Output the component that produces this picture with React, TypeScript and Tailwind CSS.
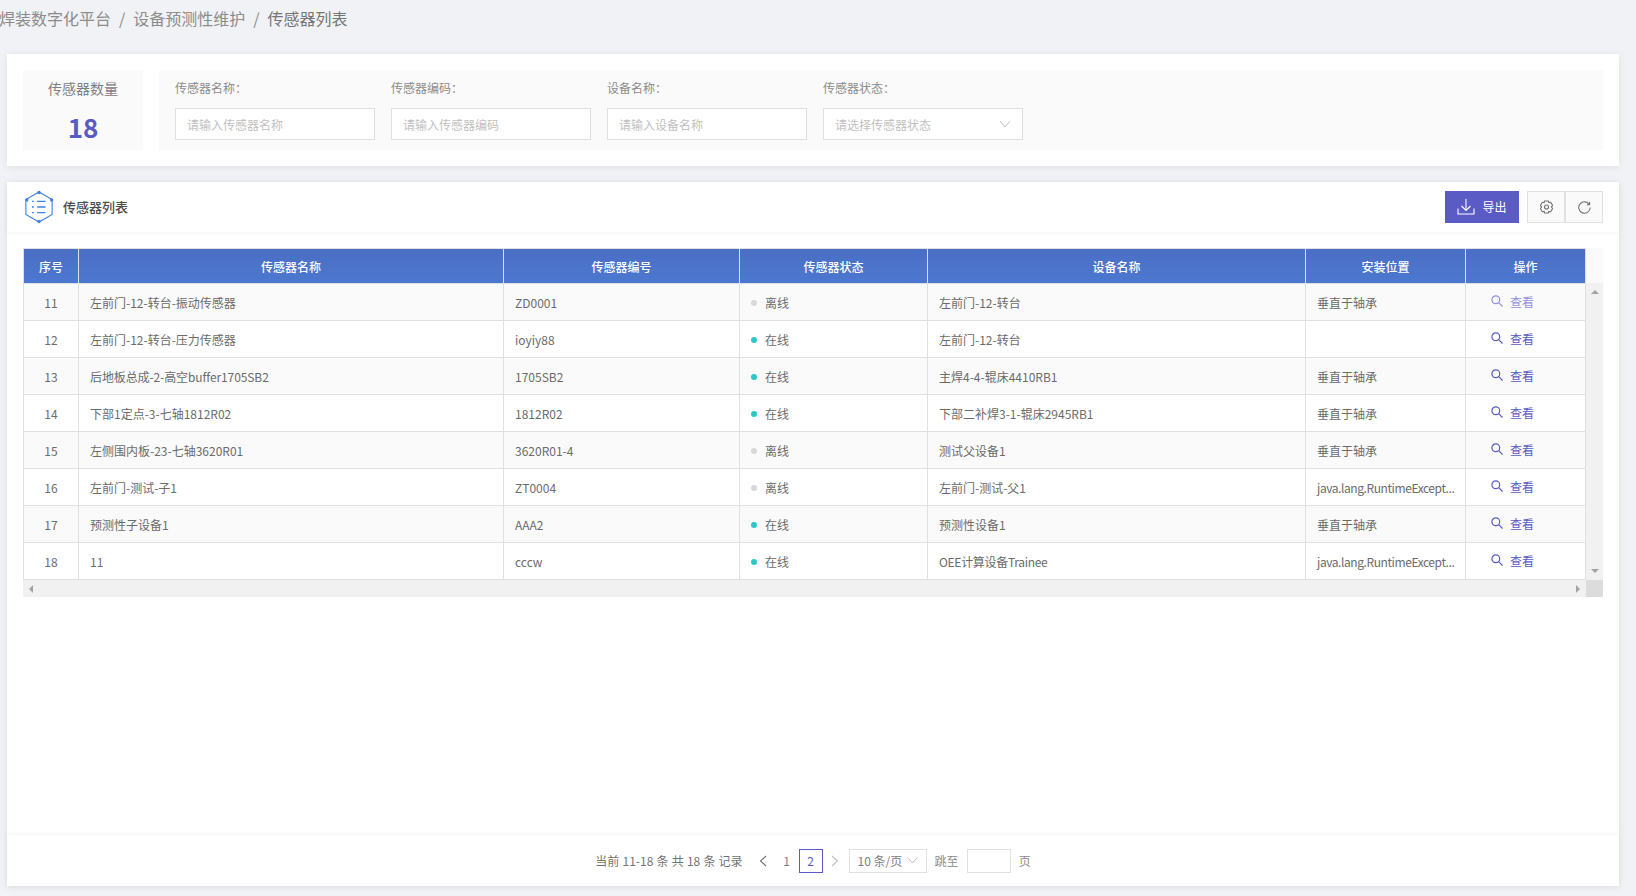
const rows = [
  ["11", "左前门-12-转台-振动传感器", "ZD0001", "离线", "左前门-12-转台", "垂直于轴承"],
  ["12", "左前门-12-转台-压力传感器", "ioyiy88", "在线", "左前门-12-转台", ""],
  ["13", "后地板总成-2-高空buffer1705SB2", "1705SB2", "在线", "主焊4-4-辊床4410RB1", "垂直于轴承"],
  ["14", "下部1定点-3-七轴1812R02", "1812R02", "在线", "下部二补焊3-1-辊床2945RB1", "垂直于轴承"],
  ["15", "左侧围内板-23-七轴3620R01", "3620R01-4", "离线", "测试父设备1", "垂直于轴承"],
  ["16", "左前门-测试-子1", "ZT0004", "离线", "左前门-测试-父1", "java.lang.RuntimeExcept..."],
  ["17", "预测性子设备1", "AAA2", "在线", "预测性设备1", "垂直于轴承"],
  ["18", "11", "cccw", "在线", "OEE计算设备Trainee", "java.lang.RuntimeExcept..."],
];

const font = "font-['Noto_Sans_CJK_SC','Noto_Sans',sans-serif]";

function track(text: string) {
  if (text.startsWith("java")) return "tracking-[-0.42px]";
  if (text.includes("Trainee")) return "tracking-[-0.3px]";
  if (text.includes("buffer")) return "tracking-[-0.1px]";
  return "";
}

function Filter({ label, placeholder, select }: { label: string; placeholder: string; select?: boolean }) {
  return (
    <div className="w-[200px] flex flex-col">
      <div className="h-[38px] text-[12px] leading-[36px] text-[#8c8c8c]">{label}</div>
      <div className="h-[32px] bg-white border border-[#e0e0e0] px-[11px] flex items-center justify-between">
        <span className="text-[12px] text-[#bfbfbf] mt-[2px]">{placeholder}</span>
        {select && (
          <svg width="12" height="8" viewBox="0 0 12 8" fill="none" stroke="#bfbfbf" strokeWidth="1">
            <path d="M1 1l5 6 5-6" />
          </svg>
        )}
      </div>
    </div>
  );
}

function Logo() {
  return (
    <svg width="30" height="34" viewBox="0 0 32 36" fill="none" stroke="#3f82e8" strokeWidth="1.2">
      <path d="M16 2 30 10v16L16 34 2 26V10Z" />
      <circle cx="16" cy="2.5" r="1.2" fill="#3f82e8" />
      <circle cx="3" cy="10.5" r="1.2" fill="#3f82e8" />
      <circle cx="29.5" cy="10.5" r="1.2" fill="#3f82e8" />
      <circle cx="16" cy="33.5" r="1.2" fill="#3f82e8" />
      <path d="M14 12h9M14 18h9M14 24h9" strokeWidth="1.4" />
      <path d="M8.5 12h2M8.5 18h2M8.5 24h2" strokeWidth="1.4" />
    </svg>
  );
}

export default function App() {
  return (
    <div className={`w-[1636px] h-[896px] overflow-hidden bg-[#f0f2f5] ${font} flex flex-col`}>
      <div className="h-[54px] shrink-0 ml-[-1px] pt-[4px] flex items-start text-[16px] leading-[28px] text-[#8c8c8c] whitespace-nowrap">
        <span>焊装数字化平台</span>
        <span className="mx-[8px]">/</span>
        <span>设备预测性维护</span>
        <span className="mx-[8px]">/</span>
        <span className="text-[#757575]">传感器列表</span>
      </div>

      <div className="ml-[7px] mr-[17px] flex flex-col gap-[16px] h-[832px]">
        <div className="h-[112px] shrink-0 bg-white shadow-[0_1px_8px_rgba(0,0,0,0.08)] px-[16px] py-[16px] flex gap-[16px]">
          <div className="w-[120px] bg-[#fafafa] flex flex-col items-center">
            <div className="text-[14px] leading-[20px] mt-[8px] text-[#808080]">传感器数量</div>
            <div className="text-[26px] leading-[34px] mt-[12px] font-bold text-[#5a5bc4]">18</div>
          </div>
          <div className="flex-1 bg-[#fafafa] px-[16px] flex gap-[16px] mt-0">
            <Filter label="传感器名称：" placeholder="请输入传感器名称" />
            <Filter label="传感器编码：" placeholder="请输入传感器编码" />
            <Filter label="设备名称：" placeholder="请输入设备名称" />
            <Filter label="传感器状态：" placeholder="请选择传感器状态" select />
          </div>
        </div>

        <div className="h-[704px] shrink-0 bg-white shadow-[0_1px_8px_rgba(0,0,0,0.08)] flex flex-col">
          <div className="h-[50px] shrink-0 shadow-[0_1px_4px_rgba(0,0,0,0.05)] pl-[17px] pr-[16px] flex items-center">
            <Logo />
            <span className="ml-[9px] text-[13px] font-medium text-[#4d4d4d]">传感器列表</span>
            <div className="ml-auto flex items-center">
              <button className="w-[74px] h-[32px] bg-[#5a5bc4] text-white text-[12px] flex items-center justify-center gap-[7px] mr-[8px]">
                <svg width="18" height="17" viewBox="0 0 18 17" fill="none" stroke="white" strokeWidth="1.1" className="mb-[2px]">
                  <path d="M9 1v11M4.5 8 9 12.5 13.5 8M1 10.5V16h16v-5.5" />
                </svg>
                导出
              </button>
              <button className="w-[38px] h-[32px] bg-[#fafafa] border border-[#e0e0e0] flex items-center justify-center">
                <svg width="13" height="14" viewBox="0 0 13 14" fill="none" stroke="#737373" strokeWidth="1.1">
                  <path d="M4.6 1h3.8l.5 1.6 1.8-.3 1.9 3.2-1.2 1.5 1.2 1.5-1.9 3.2-1.8-.3L8.4 13H4.6l-.5-1.6-1.8.3L.4 8.5 1.6 7 .4 5.5l1.9-3.2 1.8.3Z" />
                  <circle cx="6.5" cy="7" r="2" />
                </svg>
              </button>
              <button className="w-[38px] h-[32px] bg-[#fafafa] border border-[#e0e0e0] flex items-center justify-center">
                <svg width="13" height="13" viewBox="0 0 13 13" fill="none" stroke="#737373" strokeWidth="1.1">
                  <path d="M11.4 3.6A5.7 5.7 0 1 0 12.2 6.5M11.6 1v2.8H8.9" />
                </svg>
              </button>
            </div>
          </div>

          <div className="mt-[16px] mx-[16px] flex flex-col w-[1580px]">
            <div className="flex">
              <table className="w-[1563px] table-fixed border-collapse text-[12px] text-[#6b6b6b]">
                <colgroup>
                  <col className="w-[55px]" />
                  <col className="w-[425px]" />
                  <col className="w-[236px]" />
                  <col className="w-[188px]" />
                  <col className="w-[378px]" />
                  <col className="w-[160px]" />
                  <col className="w-[120px]" />
                </colgroup>
                <thead>
                  <tr className="h-[35px] bg-gradient-to-b from-[#4a6fc4] to-[#4c78d0] text-white">
                    {["序号", "传感器名称", "传感器编号", "传感器状态", "设备名称", "安装位置", "操作"].map((h) => (
                      <th key={h} className="border border-[#e0e0e0] font-medium text-center p-0 pt-[1px]">
                        {h}
                      </th>
                    ))}
                  </tr>
                </thead>
                <tbody>
                  {rows.map((r, i) => (
                    <tr key={r[0]} className={`h-[37px] ${i % 2 === 0 ? "bg-[#fafafa]" : "bg-white"}`}>
                      <td className="border border-[#e0e0e0] text-center p-0 pt-[2px]">{r[0]}</td>
                      <td className={`border border-[#e0e0e0] px-[11px] pt-[2px] ${track(r[1])}`}>{r[1]}</td>
                      <td className="border border-[#e0e0e0] px-[11px] pt-[2px]">{r[2]}</td>
                      <td className="border border-[#e0e0e0] px-[11px] pt-[2px]">
                        <span className="flex items-center gap-[8px]">
                          <i className={`block w-[6px] h-[6px] rounded-full ${r[3] === "在线" ? "bg-[#2cc7c9]" : "bg-[#d9d9d9]"}`} />
                          {r[3]}
                        </span>
                      </td>
                      <td className={`border border-[#e0e0e0] px-[11px] pt-[2px] ${track(r[4])}`}>{r[4]}</td>
                      <td className={`border border-[#e0e0e0] px-[11px] pt-[2px] whitespace-nowrap ${track(r[5])}`}>{r[5]}</td>
                      <td className="border border-[#e0e0e0] p-0 pl-[25px]">
                        <span className={`flex items-center gap-[7px] ${i === 0 ? "text-[#9292dc]" : "text-[#5a5bc4]"}`}>
                          <svg width="12" height="12" viewBox="0 0 12 12" fill="none" stroke="currentColor" strokeWidth="1.2" className="shrink-0 mb-[2px]">
                            <circle cx="4.8" cy="4.8" r="3.9" />
                            <path d="M7.7 7.7 11.5 11.5" />
                          </svg>
                          查看
                        </span>
                      </td>
                    </tr>
                  ))}
                </tbody>
              </table>
              <div className="w-[17px] flex flex-col">
                <div className="h-[35px] bg-[#fafafa]" />
                <div className="flex-1 bg-[#f1f1f1] flex flex-col items-center justify-between py-[7px]">
                  <i className="block w-0 h-0 border-x-[4px] border-x-transparent border-b-[4px] border-b-[#a3a3a3]" />
                  <i className="block w-0 h-0 border-x-[4px] border-x-transparent border-t-[4px] border-t-[#a3a3a3]" />
                </div>
              </div>
            </div>
            <div className="flex h-[17px]">
              <div className="w-[1563px] bg-[#f1f1f1] flex items-center justify-between px-[6px]">
                <i className="block w-0 h-0 border-y-[4px] border-y-transparent border-r-[4px] border-r-[#a3a3a3]" />
                <i className="block w-0 h-0 border-y-[4px] border-y-transparent border-l-[4px] border-l-[#a3a3a3]" />
              </div>
              <div className="w-[17px] bg-[#dcdcdc]" />
            </div>
          </div>

          <div className="mt-auto h-[51px] shrink-0 shadow-[0_-1px_4px_rgba(0,0,0,0.05)] flex items-center justify-center text-[12px] text-[#8c8c8c]">
            <span className="whitespace-pre text-[#737373] [word-spacing:0.5px]">当前 11-18 条 共 18 条 记录</span>
            <svg width="8" height="12" viewBox="0 0 8 12" fill="none" stroke="#737373" strokeWidth="1.1" className="ml-[16px]">
              <path d="M7 1 1.5 6 7 11" />
            </svg>
            <span className="ml-[16px] w-[8px] text-center text-[#808080]">1</span>
            <span className="ml-[8px] w-[24px] h-[24px] border border-[#5a5bc4] text-[#5a5bc4] flex items-center justify-center">2</span>
            <svg width="8" height="12" viewBox="0 0 8 12" fill="none" stroke="#bfbfbf" strokeWidth="1.1" className="ml-[8px]">
              <path d="M1 1l5.5 5L1 11" />
            </svg>
            <div className="ml-[10px] w-[78px] h-[24px] border border-[#e0e0e0] flex items-center justify-between px-[8px]">
              <span className="whitespace-pre text-[#808080]">10 条/页</span>
              <svg width="11" height="7" viewBox="0 0 11 7" fill="none" stroke="#bfbfbf" strokeWidth="1">
                <path d="M.5.5 5.5 6l5-5.5" />
              </svg>
            </div>
            <span className="ml-[8px]">跳至</span>
            <div className="ml-[8px] w-[44px] h-[24px] border border-[#e0e0e0]" />
            <span className="ml-[8px]">页</span>
          </div>
        </div>
      </div>
    </div>
  );
}
